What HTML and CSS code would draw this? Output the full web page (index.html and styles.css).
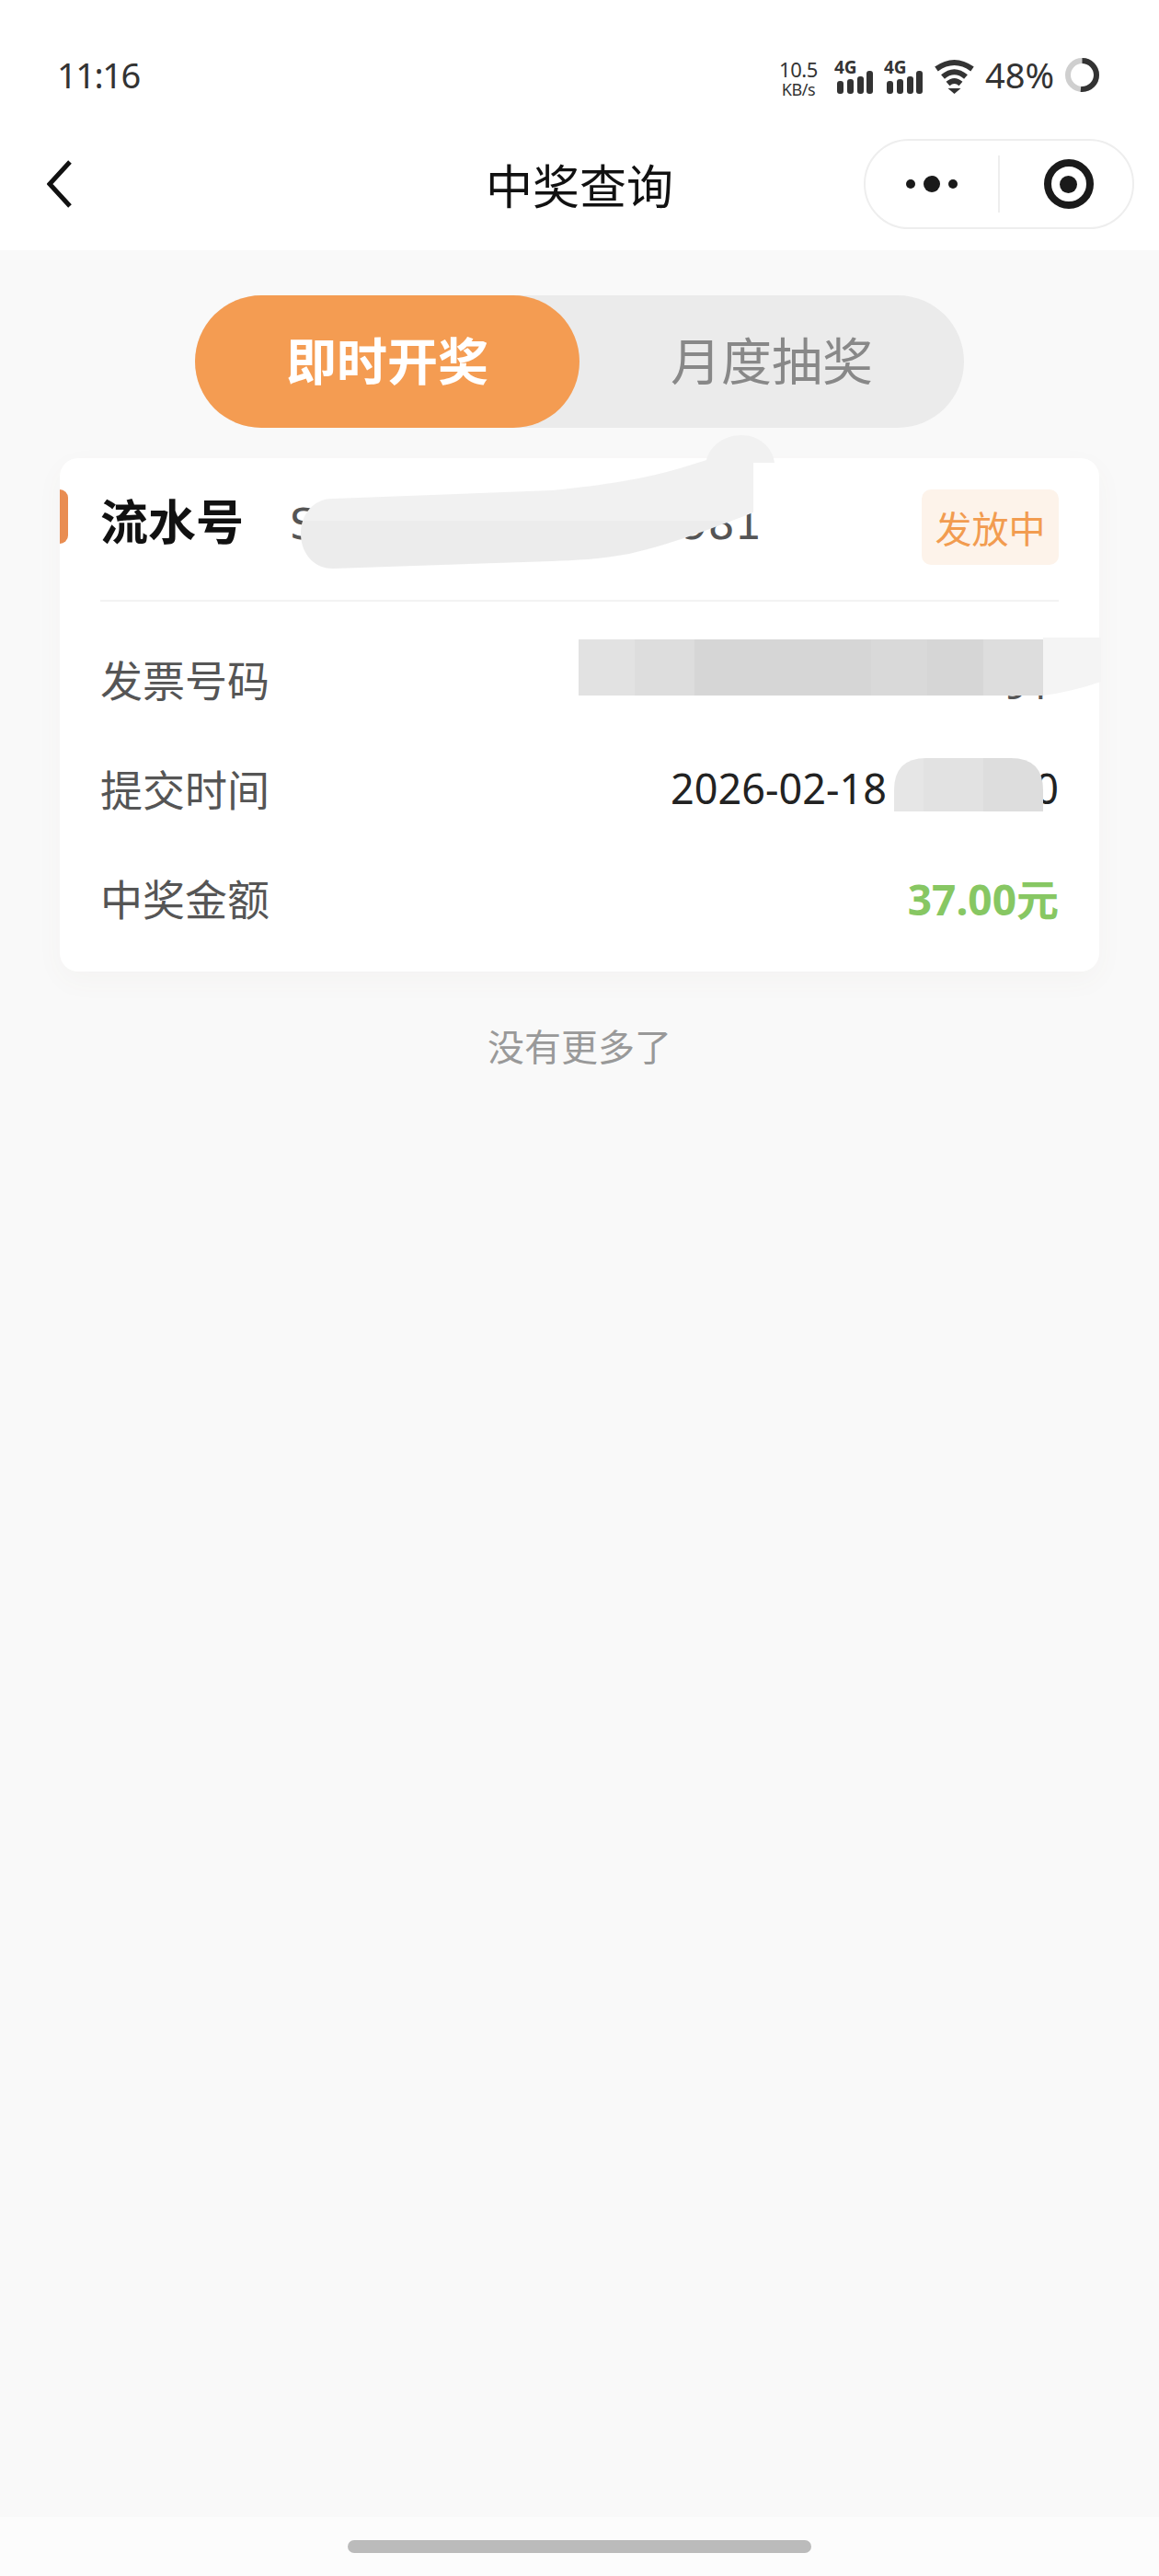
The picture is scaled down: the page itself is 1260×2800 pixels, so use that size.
FILE: index.html
```html
<!DOCTYPE html>
<html lang="zh-CN">
<head>
  <meta charset="UTF-8">
  <meta name="viewport" content="width=device-width, initial-scale=1.0">
  <title>中奖查询</title>
  <link rel="stylesheet" href="styles.css">
</head>
<body>
  <div class="page">
    <div class="header">
      <div class="status-bar">
        <span class="clock">11:16</span>
        <div class="status-icons">
          <div class="net-speed">
            <span class="speed-num">10.5</span>
            <span class="speed-unit">KB/s</span>
          </div>
          <svg class="signal" width="42" height="46" viewBox="0 -8 42 46">
            <text class="signal-text" x="0" y="15">4G</text>
            <rect x="3" y="23" width="7" height="14" rx="3"/>
            <rect x="14" y="21" width="7" height="16" rx="3"/>
            <rect x="25" y="18" width="7" height="19" rx="3"/>
            <rect x="35" y="12" width="7" height="25" rx="3"/>
          </svg>
          <svg class="signal" width="42" height="46" viewBox="0 -8 42 46">
            <text class="signal-text" x="0" y="15">4G</text>
            <rect x="3" y="23" width="7" height="14" rx="3"/>
            <rect x="14" y="21" width="7" height="16" rx="3"/>
            <rect x="25" y="18" width="7" height="19" rx="3"/>
            <rect x="35" y="12" width="7" height="25" rx="3"/>
          </svg>
          <svg class="wifi" width="45" height="38" viewBox="0 0 45 38">
            <path d="M3 11 Q22.500 -3 42 11"/>
            <path d="M10 19.500 Q22.500 9 35 19.500"/>
            <path d="M15.500 27 Q22.500 21 29.500 27"/>
            <polygon class="wifi-dot" points="15.500,32 29.500,32 22.500,38"/>
          </svg>
          <span class="battery-num">48%</span>
          <svg class="battery-ring" width="37" height="37" viewBox="0 0 37 37">
            <circle class="ring-bg" cx="18.500" cy="18.500" r="15.500"/>
            <circle class="ring-fill" cx="18.500" cy="18.500" r="15.500" stroke-dasharray="50 98"/>
          </svg>
        </div>
      </div>
      <div class="nav-bar">
        <svg class="back-icon" width="27" height="52" viewBox="0 0 27 52">
          <path d="M25 2 L3 26 L25 50"/>
        </svg>
        <h1 class="nav-title">中奖查询</h1>
        <div class="capsule">
          <div class="capsule-more">
            <span class="dot"></span>
            <span class="dot dot-big"></span>
            <span class="dot"></span>
          </div>
          <div class="capsule-close">
            <span class="target"></span>
          </div>
        </div>
      </div>
    </div>

    <div class="main">
      <div class="tabs">
        <div class="tab tab-active">即时开奖</div>
        <div class="tab">月度抽奖</div>
      </div>

      <div class="card">
        <span class="card-tick"></span>
        <div class="card-head">
          <span class="serial-label">流水号</span>
          <div class="serial-value">
            <span>S</span>
            <span>981</span>
          </div>
          <span class="badge">发放中</span>
        </div>
        <div class="card-body">
          <div class="row">
            <span class="row-label">发票号码</span>
            <span class="row-value row-invoice">91</span>
          </div>
          <div class="row">
            <span class="row-label">提交时间</span>
            <div class="row-value row-time">
              <span>2026-02-18</span>
              <span>0</span>
            </div>
          </div>
          <div class="row">
            <span class="row-label">中奖金额</span>
            <span class="row-value row-money">37.00元</span>
          </div>
        </div>
      </div>

      <p class="no-more">没有更多了</p>
    </div>

    <div class="home-bar">
      <span class="home-indicator"></span>
    </div>

    <!-- smears over the private numbers -->
    <svg class="redactions" width="1260" height="1100" viewBox="0 0 1260 1100">
      <defs>
        <linearGradient id="smear-fill" gradientUnits="userSpaceOnUse" x1="0" y1="473" x2="0" y2="618">
          <stop offset="0" stop-color="#f1f1f1"/>
          <stop offset="0.64" stop-color="#f1f1f1"/>
          <stop offset="0.64" stop-color="#ececec"/>
          <stop offset="1" stop-color="#ececec"/>
        </linearGradient>
        <clipPath id="time-clip">
          <path d="M972 882 L972 859 Q972 824 1007 824 L1099 824 Q1134 824 1134 859 L1134 882 Z"/>
        </clipPath>
      </defs>
      <path fill="url(#smear-fill)" d="M362 542 L600 533 C670 526 715 518 768 500 C772 484 788 473 806 473 C825 473 840 486 842 503 L819 503 L819 557 C780 572 730 592 684 602 C650 608 625 609 600 610 L362 618 C340 618 327 600 327 580 C327 560 340 542 362 542 Z"/>

      <path class="smear-light" d="M1134 693 L1197 693 L1197 741 Q1165 752 1134 756 Z"/>
      <rect class="block-a" x="629" y="695" width="61" height="61"/>
      <rect class="block-b" x="690" y="695" width="65" height="61"/>
      <rect class="block-c" x="755" y="695" width="192" height="61"/>
      <rect class="block-d" x="947" y="695" width="61" height="61"/>
      <rect class="block-c" x="1008" y="695" width="61" height="61"/>
      <rect class="block-b" x="1069" y="695" width="65" height="61"/>

      <g clip-path="url(#time-clip)">
        <rect class="block-e" x="972" y="824" width="32" height="58"/>
        <rect class="block-a" x="1004" y="824" width="65" height="58"/>
        <rect class="block-b" x="1069" y="824" width="65" height="58"/>
      </g>
    </svg>
  </div>
</body>
</html>
```

FILE: styles.css
```css
* {
  box-sizing: border-box;
}
body {
  font-family: "Noto Sans", "Noto Sans CJK SC", sans-serif;
  margin: 0;
  padding: 0;
  background: #f9f9f9;
}
.page {
  position: relative;
  width: 1260px;
  height: 2800px;
  display: flex;
  flex-direction: column;
  overflow: hidden;
}

/* header */
.header {
  background: #ffffff;
  height: 272px;
}
.status-bar {
  height: 150px;
  display: flex;
  justify-content: space-between;
  align-items: flex-start;
  padding: 63px 65px 0 62px;
  color: #333333;
}
.clock {
  font-size: 38px;
  line-height: 40px;
  letter-spacing: -1.500px;
  margin-top: -2px;
}
.status-icons {
  display: flex;
  align-items: flex-start;
  gap: 12px;
}
.net-speed {
  display: flex;
  flex-direction: column;
  align-items: center;
  width: 42px;
  margin-right: 6px;
}
.speed-num {
  font-size: 22px;
  line-height: 24px;
  letter-spacing: -0.500px;
}
.speed-unit {
  font-size: 18px;
  line-height: 20px;
  letter-spacing: -0.500px;
}
.signal {
  margin-top: -6px;
  fill: #333333;
}
.signal-text {
  font-family: "Noto Sans", sans-serif;
  font-size: 19px;
  font-weight: 700;
}
.wifi {
  margin-top: 1px;
}
.wifi path {
  fill: none;
  stroke: #333333;
  stroke-width: 6px;
}
.wifi .wifi-dot {
  fill: #333333;
}
.battery-num {
  font-size: 38px;
  line-height: 40px;
  margin-top: -2px;
  margin-left: -1px;
}
.ring-bg,
.ring-fill {
  fill: none;
  stroke-width: 6px;
}
.ring-bg {
  stroke: #cfcfcf;
}
.ring-fill {
  stroke: #333333;
  transform: rotate(-90deg);
  transform-origin: center;
}

.nav-bar {
  height: 100px;
  display: grid;
  grid-template-columns: 1fr auto 1fr;
  align-items: center;
  padding: 0 27px;
}
.back-icon {
  margin-left: 24px;
}
.back-icon path {
  fill: none;
  stroke: #111111;
  stroke-width: 5px;
}
.nav-title {
  margin: 0;
  font-size: 51px;
  font-weight: 400;
  color: #111111;
}
.capsule {
  justify-self: end;
  width: 294px;
  height: 98px;
  border: 2px solid #eeeeee;
  border-radius: 49px;
  display: flex;
  align-items: center;
}
.capsule-more {
  width: 146px;
  height: 62px;
  border-right: 2px solid #eeeeee;
  display: flex;
  align-items: center;
  justify-content: center;
  gap: 9px;
}
.dot {
  width: 10px;
  height: 10px;
  border-radius: 50%;
  background: #1a1a1a;
}
.dot-big {
  width: 18px;
  height: 18px;
}
.capsule-close {
  flex: 1;
  padding-left: 5px;
  display: flex;
  align-items: center;
  justify-content: center;
}
.target {
  width: 54px;
  height: 54px;
  border: 8px solid #1a1a1a;
  border-radius: 50%;
  display: flex;
  align-items: center;
  justify-content: center;
}
.target::after {
  content: "";
  width: 19px;
  height: 19px;
  border-radius: 50%;
  background: #1a1a1a;
}

/* content */
.main {
  flex: 1;
  padding-top: 49px;
}
.tabs {
  width: 836px;
  height: 144px;
  margin: 0 auto;
  display: flex;
  background: #ebebeb;
  border-radius: 72px;
}
.tab {
  flex: 1;
  display: flex;
  align-items: center;
  justify-content: center;
  padding-bottom: 8px;
  font-size: 55px;
  color: #888888;
  border-radius: 72px;
}
.tab-active {
  flex: none;
  width: 418px;
  background: #f49c52;
  color: #ffffff;
  font-weight: 700;
}

.card {
  position: relative;
  margin: 33px 65px 0;
  height: 558px;
  padding: 0 44px;
  background: #ffffff;
  border-radius: 20px;
  box-shadow: 0 10px 30px rgba(120, 100, 80, 0.04);
}
.card-tick {
  position: absolute;
  left: 0;
  top: 34px;
  width: 9px;
  height: 59px;
  background: #e98d52;
  border-radius: 0 9px 9px 0;
}
.card-head {
  height: 156px;
  padding-top: 34px;
  display: flex;
  align-items: flex-start;
  border-bottom: 2px solid #f3f3f3;
}
.serial-label {
  font-size: 52px;
  line-height: 70px;
  font-weight: 700;
  color: #111111;
}
.serial-value {
  width: 513px;
  margin-left: 50px;
  display: flex;
  justify-content: space-between;
  font-family: "DejaVu Sans", sans-serif;
  font-size: 46px;
  line-height: 76px;
  color: #555555;
}
.badge {
  margin-left: auto;
  width: 149px;
  height: 82px;
  display: flex;
  align-items: center;
  justify-content: center;
  font-size: 40px;
  color: #f29c50;
  background: #fdf3ea;
  border-radius: 10px;
}
.card-body {
  padding-top: 26px;
}
.row {
  height: 119px;
  padding-bottom: 5px;
  display: flex;
  justify-content: space-between;
  align-items: center;
}
.row-label {
  font-size: 46px;
  color: #555555;
}
.row-value {
  font-size: 45px;
  color: #222222;
}
.row-invoice {
  margin: 10px 8px 0 0;
  color: #555555;
}
.row-time {
  width: 422px;
  display: flex;
  justify-content: space-between;
}
.row-money {
  font-size: 46px;
  font-weight: 700;
  color: #87c763;
}
.no-more {
  margin: 52px 0 0;
  text-align: center;
  font-size: 40px;
  line-height: 60px;
  color: #999999;
}

.home-bar {
  height: 64px;
  background: #fcfcfc;
  display: flex;
  align-items: center;
  justify-content: center;
}
.home-indicator {
  width: 504px;
  height: 14px;
  border-radius: 7px;
  background: #bbbbbb;
}

.redactions {
  position: absolute;
  top: 0;
  left: 0;
  pointer-events: none;
}
.smear-light {
  fill: #f4f4f4;
}
.block-a {
  fill: #e2e2e2;
}
.block-b {
  fill: #dddddd;
}
.block-c {
  fill: #d6d6d6;
}
.block-d {
  fill: #d9d9d9;
}
.block-e {
  fill: #e6e6e6;
}
```
